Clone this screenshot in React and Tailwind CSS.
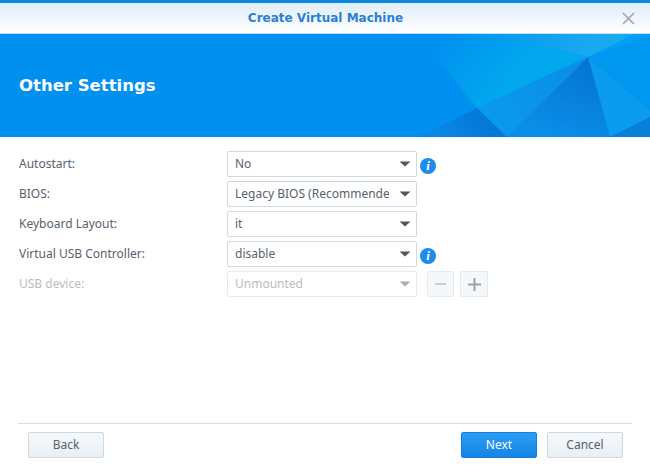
const FONT = "font-['Noto_Sans','Open_Sans',sans-serif]";
const BOLD = "font-['DejaVu_Sans',sans-serif] font-bold";

function Arrow({ disabled }) {
  return (
    <svg width="12" height="6" viewBox="0 0 12 6" className="shrink-0">
      <path d="M0.5 0.5H11.5L6 5.5Z" fill={disabled ? "#a9adb3" : "#50565f"} />
    </svg>
  );
}

function Info() {
  return (
    <div className="ml-[3px] mt-[3px] flex h-[16px] w-[16px] shrink-0 items-center justify-center rounded-full bg-[#1f8ceb] font-['Liberation_Serif',serif] text-[13px] font-bold italic leading-none text-white">
      i
    </div>
  );
}

function Row({ label, value, info, disabled }) {
  return (
    <div className="flex h-[26px] items-center">
      <div className={`w-[208px] shrink-0 text-[12px] ${disabled ? "text-[#b9bdc2]" : "text-[#58626c]"}`}>{label}</div>
      <div className={`flex h-[26px] w-[190px] shrink-0 items-center rounded-[2px] border bg-white pl-[7px] pr-[5px] ${disabled ? "border-[#e6ebf0]" : "border-[#cfd9e2]"}`}>
        <div className={`min-w-0 flex-1 overflow-hidden whitespace-nowrap text-[12px] ${disabled ? "text-[#b9bdc2]" : "text-[#58626c]"}`}>{value}</div>
        <div className="ml-[10px] flex"><Arrow disabled={disabled} /></div>
      </div>
      {info && <Info />}
      {disabled && (
        <div className="ml-[10px] flex gap-[6px]">
          <div className="flex h-[26px] w-[27px] items-center justify-center rounded-[2px] border border-[#e3e9ee] bg-[#f5f8fa]">
            <div className="h-[2px] w-[11px] bg-[#c9ced3]" />
          </div>
          <div className="flex h-[26px] w-[28px] items-center justify-center rounded-[2px] border border-[#e3e9ee] bg-[#f5f8fa]">
            <svg width="13" height="13" viewBox="0 0 13 13"><path d="M0 6.5H13M6.5 0V13" stroke="#9aa1a8" strokeWidth="2" /></svg>
          </div>
        </div>
      )}
    </div>
  );
}

function Btn({ children, primary }) {
  return (
    <div className={`flex h-[26px] w-[76px] items-center justify-center rounded-[2px] border text-[12px] ${primary ? "border-[#1a7fd6] bg-gradient-to-b from-[#2a9ef5] to-[#1484e6] text-white" : "border-[#ced8e1] bg-gradient-to-b from-[#f6f9fb] to-[#e9eff4] text-[#58626c]"}`}>
      {children}
    </div>
  );
}

export default function App() {
  return (
    <div className={`flex h-[465px] w-[650px] flex-col overflow-hidden bg-white ${FONT}`}>
      <div className="h-[3px] bg-[#0a86dc]" />
      <div className="flex h-[30px] items-center bg-gradient-to-b from-[#dfedf8] to-[#ffffff] pl-[29px] pr-[15px]">
        <div className={`flex-1 text-center text-[12px] text-[#2a7fd5] ${BOLD}`}>Create Virtual Machine</div>
        <svg width="13" height="13" viewBox="0 0 13 13" className="shrink-0"><path d="M1 1L12 12M12 1L1 12" stroke="#9ea4a9" strokeWidth="1.6" /></svg>
      </div>
      <div className="h-[1px] bg-[#bfe0f8]" />
      <div className="relative flex h-[103px] items-center bg-[#0090f0] pl-[19px]">
        <svg className="absolute inset-0" width="650" height="103" viewBox="0 34 650 103">
          <defs>
            <linearGradient id="a" gradientUnits="userSpaceOnUse" x1="430" y1="50" x2="490" y2="105"><stop offset="0" stopColor="#0090f0" /><stop offset="1" stopColor="#02a8ee" /></linearGradient>
            <linearGradient id="t" gradientUnits="userSpaceOnUse" x1="498" y1="34" x2="590" y2="50"><stop offset="0" stopColor="#0a9af0" /><stop offset="1" stopColor="#1aa8f0" /></linearGradient>
            <linearGradient id="c" gradientUnits="userSpaceOnUse" x1="588" y1="57" x2="560" y2="137"><stop offset="0" stopColor="#0572d0" /><stop offset="1" stopColor="#0a8ee8" /></linearGradient>
            <linearGradient id="d" gradientUnits="userSpaceOnUse" x1="588" y1="57" x2="476" y2="109"><stop offset="0" stopColor="#0a8ce6" /><stop offset="1" stopColor="#0a9aee" /></linearGradient>
            <linearGradient id="e" gradientUnits="userSpaceOnUse" x1="477" y1="108" x2="440" y2="137"><stop offset="0" stopColor="#0478d6" /><stop offset="1" stopColor="#0a88e4" /></linearGradient>
          </defs>
          <polygon points="419,34 498,34 588,57 477,108" fill="url(#a)" />
          <polygon points="498,34 635,34 588,57" fill="url(#t)" />
          <polygon points="635,34 650,34 650,36 588,57" fill="#00a0f6" />
          <polygon points="588,57 650,36 650,110" fill="#0097f0" />
          <polygon points="588,57 650,110 650,117 610,137" fill="#0a9bee" />
          <polygon points="588,57 610,137 507,137" fill="url(#c)" />
          <polygon points="588,57 507,137 477,108" fill="url(#d)" />
          <polygon points="477,108 507,137 419,137" fill="url(#e)" />
          <polygon points="650,117 650,137 610,137" fill="#0780da" />
        </svg>
        <div className={`relative mt-[1px] text-[16.5px] text-white ${BOLD}`}>Other Settings</div>
      </div>
      <div className="flex flex-1 flex-col pl-[19px] pr-[27px] pt-[14px]">
        <div className="flex flex-col gap-[4px]">
          <Row label="Autostart:" value="No" info />
          <Row label="BIOS:" value="Legacy BIOS (Recommended)" />
          <Row label="Keyboard Layout:" value="it" />
          <Row label="Virtual USB Controller:" value="disable" info />
          <Row label="USB device:" value="Unmounted" disabled />
        </div>
      </div>
      <div className="mx-[18px] h-[1px] bg-[#d7dde2]" />
      <div className="flex h-[41px] items-start pl-[28px] pr-[27px] pt-[8px]">
        <Btn>Back</Btn>
        <div className="flex-1" />
        <Btn primary>Next</Btn>
        <div className="ml-[10px]"><Btn>Cancel</Btn></div>
      </div>
    </div>
  );
}
